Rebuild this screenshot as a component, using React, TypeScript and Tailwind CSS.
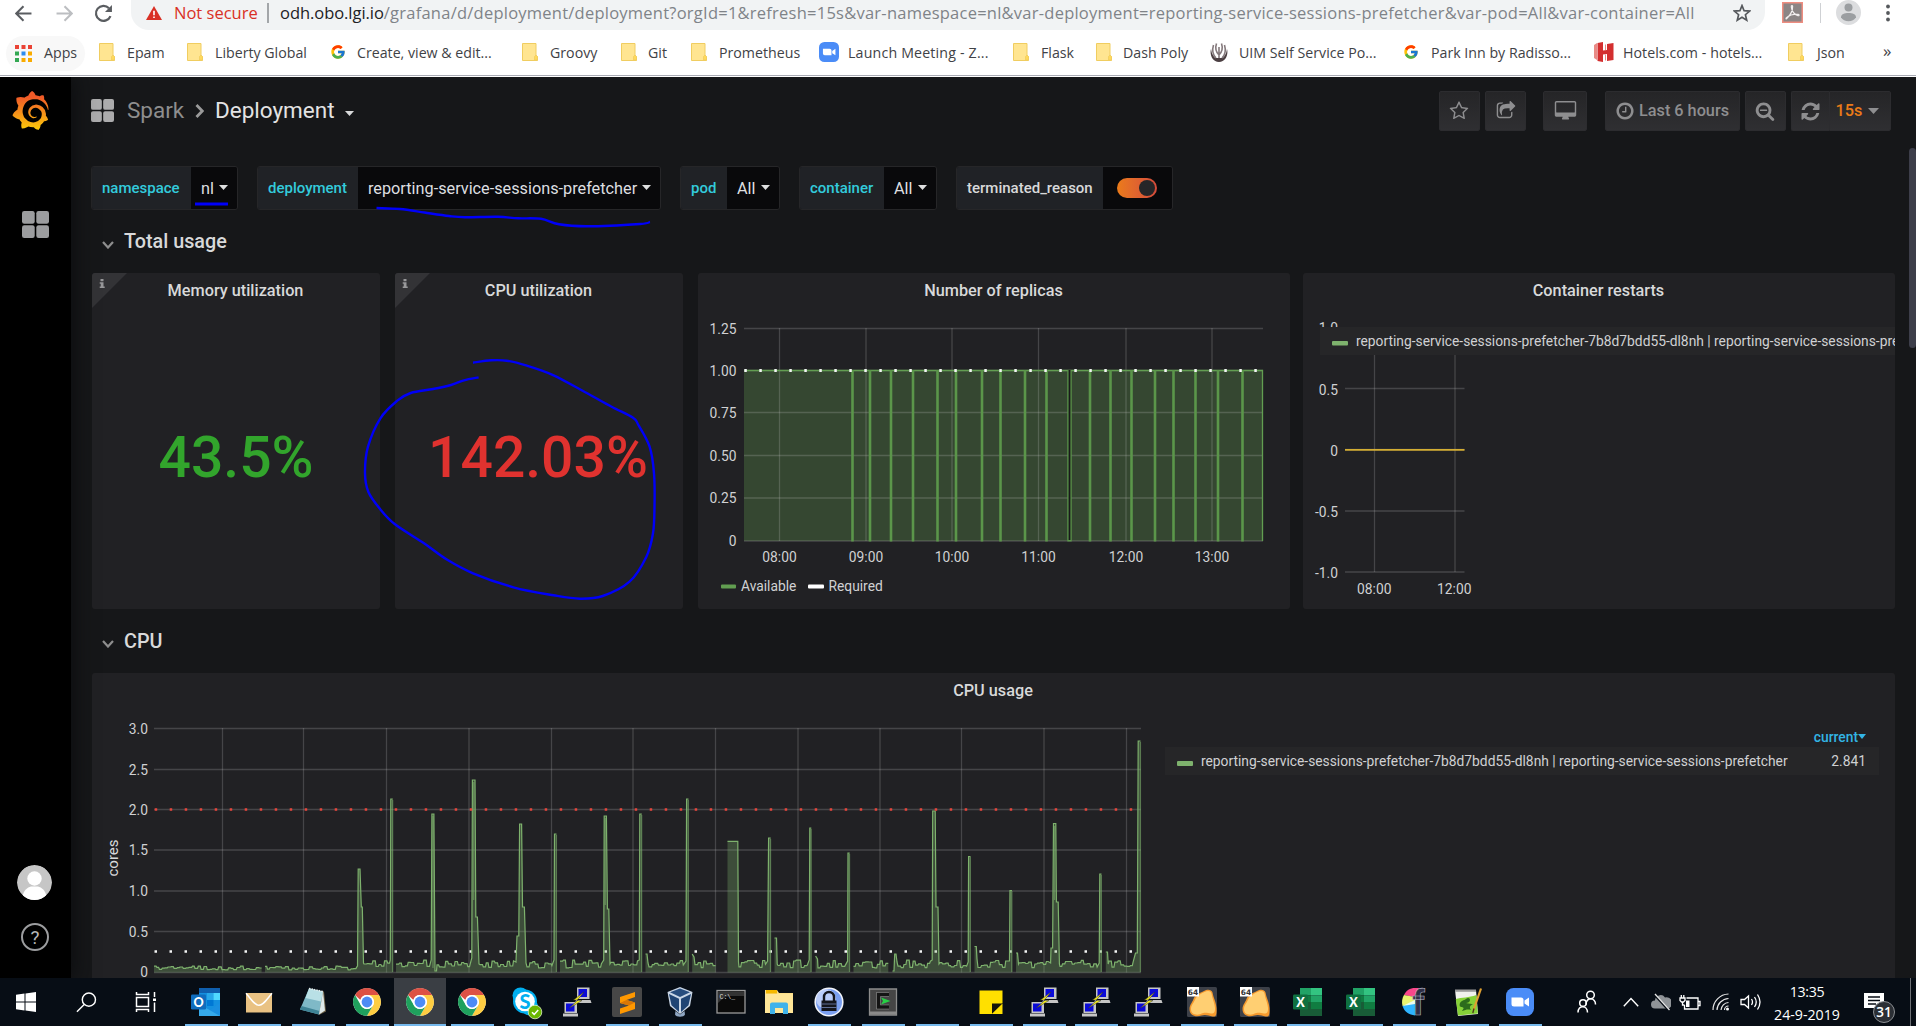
import React from "react";
import { FcGoogle } from "react-icons/fc";
import { SiGrafana } from "react-icons/si";

type Pt = [number, number];

/* ------------------------------------------------------------------ helpers */

function smooth(points: Pt[]): string {
  let d = `M${points[0][0]} ${points[0][1]}`;
  for (let i = 0; i < points.length - 1; i++) {
    const p0 = points[Math.max(i - 1, 0)];
    const p1 = points[i];
    const p2 = points[i + 1];
    const p3 = points[Math.min(i + 2, points.length - 1)];
    const c1x = p1[0] + (p2[0] - p0[0]) / 6;
    const c1y = p1[1] + (p2[1] - p0[1]) / 6;
    const c2x = p2[0] - (p3[0] - p1[0]) / 6;
    const c2y = p2[1] - (p3[1] - p1[1]) / 6;
    d += `C${c1x.toFixed(1)} ${c1y.toFixed(1)} ${c2x.toFixed(1)} ${c2y.toFixed(1)} ${p2[0]} ${p2[1]}`;
  }
  return d;
}

function Caret({ className = "" }: { className?: string }) {
  return (
    <svg viewBox="0 0 9 5" className={`h-[5px] w-[9px] shrink-0 ${className}`}>
      <path d="M0 0h9L4.5 5z" fill="currentColor" />
    </svg>
  );
}

function Fa({ d, className, w = 1792 }: { d: string; className: string; w?: number }) {
  return (
    <svg viewBox={`0 0 ${w} 1792`} className={`shrink-0 ${className}`}>
      <path d={d} fill="currentColor" />
    </svg>
  );
}

const FA = {
  star: "M1201 1004l306-297-422-62-189-382-189 382-422 62 306 297-73 421 378-199 377 199zm527-357q0 22-26 48l-363 354 86 500q1 7 1 20 0 50-41 50-19 0-40-12l-449-236-449 236q-22 12-40 12-21 0-31.5-14.5t-10.5-35.5q0-6 2-20l86-500-364-354q-25-27-25-48 0-37 56-46l502-73 225-455q19-41 49-41t49 41l225 455 502 73q56 9 56 46z",
  share:
    "M1472 989v259q0 119-84.5 203.5t-203.5 84.5h-832q-119 0-203.5-84.5t-84.5-203.5v-832q0-119 84.5-203.5t203.5-84.5h255q13 0 22.5 9.5t9.5 22.5q0 27-26 32-77 26-133 60-10 4-16 4h-112q-66 0-113 47t-47 113v832q0 66 47 113t113 47h832q66 0 113-47t47-113v-214q0-19 18-29 28-13 54-37 16-16 35-8 21 9 21 29zm237-496l-384 384q-18 19-45 19-12 0-25-5-39-17-39-59v-192h-160q-323 0-438 131-119 137-74 473 3 23-20 34-8 2-12 2-16 0-26-13-10-14-21-31t-39.5-68.5-49.5-99.5-38.5-114-17.5-122q0-49 3.5-91t14-90 28-88 47-81.5 68.5-74 94.5-61.5 124.5-48.5 159.5-30.5 196.5-11h160v-192q0-42 39-59 13-5 25-5 26 0 45 19l384 384q19 19 19 45t-19 45z",
  desktop:
    "M1856 992v-832q0-13-9.5-22.5t-22.5-9.5h-1600q-13 0-22.5 9.5t-9.5 22.5v832q0 13 9.5 22.5t22.5 9.5h1600q13 0 22.5-9.5t9.5-22.5zm128-832v1088q0 66-47 113t-113 47h-544q0 37 16 77.5t32 71 16 43.5q0 26-19 45t-45 19h-512q-26 0-45-19t-19-45q0-14 16-44t32-70 16-78h-544q-66 0-113-47t-47-113v-1088q0-66 47-113t113-47h1600q66 0 113 47t47 113z",
  clock:
    "M1024 544v448q0 14-9 23t-23 9h-320q-14 0-23-9t-9-23v-64q0-14 9-23t23-9h224v-352q0-14 9-23t23-9h64q14 0 23 9t9 23zm416 352q0-148-73-273t-198-198-273-73-273 73-198 198-73 273 73 273 198 198 273 73 273-73 198-198 73-273zm224 0q0 209-103 385.5t-279.5 279.5-385.5 103-385.5-103-279.5-279.5-103-385.5 103-385.5 279.5-279.5 385.5-103 385.5 103 279.5 279.5 103 385.5z",
  zoomOut:
    "M1088 800v64q0 13-9.5 22.5t-22.5 9.5h-576q-13 0-22.5-9.5t-9.5-22.5v-64q0-13 9.5-22.5t22.5-9.5h576q13 0 22.5 9.5t9.5 22.5zm128 32q0-185-131.5-316.5t-316.5-131.5-316.5 131.5-131.5 316.5 131.5 316.5 316.5 131.5 316.5-131.5 131.5-316.5zm512 832q0 53-37.5 90.5t-90.5 37.5q-54 0-90-38l-343-342q-179 124-399 124-143 0-273.5-55.5t-225-150-150-225-55.5-273.5 55.5-273.5 150-225 225-150 273.5-55.5 273.5 55.5 225 150 150 225 55.5 273.5q0 220-124 399l343 343q37 37 37 90z",
  refresh:
    "M1639 1056q0 5-1 7-64 268-268 434.5t-478 166.5q-146 0-282.5-55t-243.5-157l-129 129q-19 19-45 19t-45-19-19-45v-448q0-26 19-45t45-19h448q26 0 45 19t19 45-19 45l-137 137q71 66 161 102t187 36q134 0 250-65t186-179q11-17 53-117 8-23 30-23h192q13 0 22.5 9.5t9.5 22.5zm25-800v448q0 26-19 45t-45 19h-448q-26 0-45-19t-19-45 19-45l138-138q-148-137-349-137-134 0-250 65t-186 179q-11 17-53 117-8 23-30 23h-199q-13 0-22.5-9.5t-9.5-22.5v-7q65-268 270-434.5t480-166.5q146 0 284 55.5t245 156.5l130-129q19-19 45-19t45 19 19 45z",
};

/* ------------------------------------------------------------ browser chrome */

function AddressRow() {
  return (
    <div className="flex h-[30px] shrink-0 items-start">
      <div className="flex h-[26px] w-[131px] shrink-0 items-center">
        <svg viewBox="0 0 16 16" className="ml-[15px] size-[17px]" fill="none" stroke="#5a5d61" strokeWidth="1.9">
          <path d="M15.5 8H1.5M8 1.2L1.2 8 8 14.8" />
        </svg>
        <svg viewBox="0 0 16 16" className="ml-6 size-[17px]" fill="none" stroke="#bcbec1" strokeWidth="1.9">
          <path d="M.5 8h14M8 1.2L14.8 8 8 14.8" />
        </svg>
        <svg viewBox="0 0 18 18" className="ml-[21px] size-[19px]" fill="none" stroke="#5a5d61" strokeWidth="2.1">
          <path d="M15.6 11.4A7.1 7.1 0 1 1 14.2 4" />
          <path d="M17 1v6.600h-6.600z" fill="#5a5d61" stroke="none" />
        </svg>
      </div>
      <div className="flex h-[30px] w-[1634px] shrink-0 items-start rounded-b-[18px] bg-[#f1f3f4]">
        <div className="flex h-[26px] w-full items-center font-['Open_Sans',sans-serif] text-[16.5px] whitespace-nowrap">
          <svg viewBox="0 0 16 14" className="ml-[15px] h-[14px] w-4">
            <path d="M8 0l8 14H0z" fill="#d93025" />
            <path d="M7.200 4.800h1.600v4.400H7.200zM7.200 10.400h1.600V12H7.200z" fill="#fff" />
          </svg>
          <span className="ml-3 w-[83px] text-[#d93025]">Not secure</span>
          <span className="ml-[10px] h-[20px] w-[2px] bg-[#a3a6a9]" />
          <span className="ml-[11px] grow tracking-[0.24px] text-[#7f8388]">
            <span className="tracking-[-0.05px] text-[#202124]">odh.obo.lgi.io</span>
            /grafana/d/deployment/deployment?orgId=1&amp;refresh=15s&amp;var-namespace=nl&amp;var-deployment=reporting-service-sessions-prefetcher&amp;var-pod=All&amp;var-container=All
          </span>
          <svg viewBox="0 0 18 18" className="mr-[14px] size-[18px] shrink-0" fill="none" stroke="#55585c" strokeWidth="1.7">
            <path d="M9 1.600l2.100 5.100 5.500.4-4.200 3.600 1.300 5.400L9 13.200l-4.700 2.900 1.300-5.400L1.400 7.100l5.500-.4z" />
          </svg>
        </div>
      </div>
      <svg viewBox="0 0 21 21" className="mt-[2px] ml-[17px] size-[21px]">
        <rect x=".75" y=".75" width="19.5" height="19.5" fill="#8c8585" stroke="#ee8d80" strokeWidth="1.5" />
        <path
          d="M4.500 16.800C8 13.500 10.800 8.500 10.600 4.500c0-1.400-1.500-1.200-1.300.3.500 4 3.200 7.700 6.700 8.900 1.300.3 1.500-1 .2-1.300-3.700-.5-8.700.8-11.400 3-1.200 1-.9 1.900-.3 1.400z"
          fill="none"
          stroke="#f3efef"
          strokeWidth="1.200"
        />
      </svg>
      <span className="mt-[3px] ml-[17px] h-5 w-px bg-[#cfd1d4]" />
      <svg viewBox="0 0 25 25" className="ml-[15px] size-[25px]">
        <circle cx="12.500" cy="12.500" r="12.500" fill="#dcdddf" />
        <circle cx="12.500" cy="7.600" r="4" fill="#9b9ea1" />
        <path d="M5 17.300c0-3 3.500-4.200 7.500-4.200s7.500 1.200 7.500 4.200c-1.500 2.400-4.300 4-7.500 4s-6-1.600-7.500-4z" fill="#9b9ea1" />
      </svg>
      <svg viewBox="0 0 4 18" className="mt-[4px] ml-[25px] h-[18px] w-1" fill="#55585c">
        <circle cx="2" cy="2.500" r="1.900" />
        <circle cx="2" cy="9" r="1.900" />
        <circle cx="2" cy="15.500" r="1.900" />
      </svg>
    </div>
  );
}

function Folder() {
  return (
    <svg viewBox="0 0 16 18" className="h-[18px] w-4 shrink-0">
      <path d="M.5.5h13.500v12l1.500 1.200v3.800H.5z" fill="#ffe591" stroke="#f0cd60" />
      <path d="M12.500 17v-3.500l1.500-1.500 1.500 1.500V17z" fill="#ffd95c" stroke="#f0cd60" strokeWidth=".8" />
    </svg>
  );
}

function AppsGrid() {
  const colors = ["#ea4335", "#ea4335", "#ea4335", "#34a853", "#2d8cf0", "#f9ab00", "#34a853", "#f9ab00", "#f9ab00"];
  return (
    <svg viewBox="0 0 17 17" className="size-[17px] shrink-0">
      {colors.map((c, i) => (
        <rect key={i} x={(i % 3) * 6.5} y={Math.floor(i / 3) * 6.5} width="4" height="4" fill={c} />
      ))}
    </svg>
  );
}

function ZoomIcon({ className }: { className: string }) {
  return (
    <svg viewBox="0 0 28 28" className={`shrink-0 ${className}`}>
      <rect width="28" height="28" rx="7.500" fill="#4a8cf7" />
      <path d="M5.500 9.500h9.500a2.500 2.500 0 0 1 2.500 2.500v6.500H8a2.500 2.500 0 0 1-2.500-2.500zM18.500 12.600l4.500-3v9l-4.500-3z" fill="#fff" />
    </svg>
  );
}

function TridentIcon() {
  return (
    <svg viewBox="0 0 18 20" className="h-5 w-[18px] shrink-0">
      <path d="M1 7c-1.500 5 1 13 8 13s9.500-8 8-13c-.6 5-3 8-4.500 9h-7C4 15 1.600 12 1 7z" fill="#4b3f42" />
      <path d="M3.500 3C2 8 3 13 6 16M14.500 3c1.500 5 .5 10-2.500 13M9 5v11M6.500 1.500C5 6 6 10 9 13c3-3 4-7 2.500-11.500" fill="none" stroke="#857a7d" strokeWidth="1.600" />
    </svg>
  );
}

function HotelsIcon() {
  return (
    <svg viewBox="0 0 20 20" className="size-5 shrink-0">
      <path d="M0 3l3-2v17l-3-2z" fill="#e98b86" />
      <path d="M3.500 1L9 0v8.500l4-.5V2l6.500-1v17L13 19v-7l-4 .600V20l-5.500-1z" fill="#d32f2f" />
      <path d="M11.500 2.500V8M11.500 12.500v6" stroke="#e98b86" strokeWidth="1" />
    </svg>
  );
}

const bookmarks: { label: string; icon: React.ReactNode; width: string; gap: string }[] = [
  { label: "Epam", icon: <Folder />, width: "w-[88px]", gap: "gap-3" },
  { label: "Liberty Global", icon: <Folder />, width: "w-[143px]", gap: "gap-3" },
  { label: "Create, view & edit...", icon: <FcGoogle className="size-4 shrink-0" />, width: "w-[192px]", gap: "gap-[11px]" },
  { label: "Groovy", icon: <Folder />, width: "w-[99px]", gap: "gap-3" },
  { label: "Git", icon: <Folder />, width: "w-[70px]", gap: "gap-[11px]" },
  { label: "Prometheus", icon: <Folder />, width: "w-[128px]", gap: "gap-3" },
  { label: "Launch Meeting - Z...", icon: <ZoomIcon className="size-5" />, width: "w-[194px]", gap: "gap-[9px] tracking-[0.18px]" },
  { label: "Flask", icon: <Folder />, width: "w-[83px]", gap: "gap-3" },
  { label: "Dash Poly", icon: <Folder />, width: "w-[114px]", gap: "gap-[11px]" },
  { label: "UIM Self Service Po...", icon: <TridentIcon />, width: "w-[193px]", gap: "gap-[11px]" },
  { label: "Park Inn by Radisso...", icon: <FcGoogle className="size-4 shrink-0" />, width: "w-[191px]", gap: "gap-3" },
  { label: "Hotels.com - hotels...", icon: <HotelsIcon />, width: "w-[194px]", gap: "gap-[9px] tracking-[0.05px]" },
  { label: "Json", icon: <Folder />, width: "w-[95px]", gap: "gap-[13px]" },
];

function BookmarkBar() {
  return (
    <div className="flex h-[45px] shrink-0 items-center pl-1.5 font-['Open_Sans',sans-serif] text-[14.2px] whitespace-nowrap text-[#3f4246]">
      <div className="mt-px mr-3.5 flex h-[35px] w-[79px] items-center gap-3 rounded-full bg-[#f8f8f8] pl-[9px]">
        <AppsGrid />
        <span>Apps</span>
      </div>
      {bookmarks.map((b) => (
        <div key={b.label} className={`flex shrink-0 items-center ${b.width} ${b.gap}`}>
          {b.icon}
          <span>{b.label}</span>
        </div>
      ))}
      <span className="-mt-1 text-[17px]">»</span>
    </div>
  );
}

/* -------------------------------------------------------------------- sidebar */

function DashGrid({ className, fill }: { className: string; fill: string }) {
  return (
    <svg viewBox="0 0 24 24" className={`shrink-0 ${className}`} fill={fill}>
      <rect width="11.300" height="11.300" rx="2" />
      <rect x="12.700" width="11.300" height="11.300" rx="2" />
      <rect y="12.700" width="11.300" height="11.300" rx="2" />
      <rect x="12.700" y="12.700" width="11.300" height="11.300" rx="2" />
    </svg>
  );
}

function Sidebar() {
  return (
    <aside className="z-10 flex w-[71px] shrink-0 flex-col bg-black shadow-[0_0_20px_2px_#0b0c0e]">
      <svg className="size-0">
        <defs>
          <linearGradient id="grafana-flame" x1="0" y1="0" x2="0" y2="1">
            <stop offset="0.150" stopColor="#f05a28" />
            <stop offset="1" stopColor="#fbca0a" />
          </linearGradient>
        </defs>
      </svg>
      <SiGrafana className="mt-3.5 ml-[11px] size-[39px]" style={{ fill: "url(#grafana-flame)" }} />
      <DashGrid className="mt-[81px] ml-[22px] size-[27px]" fill="#9c9d9f" />
      <div className="grow" />
      <svg viewBox="0 0 35 35" className="ml-[17px] size-[35px] rounded-full">
        <circle cx="17.500" cy="17.500" r="17.500" fill="#c6c6c6" />
        <circle cx="17.500" cy="13.500" r="7.200" fill="#fff" />
        <path d="M5.500 32c1-7 5-9.500 8.500-10.500h7c3.500 1 7.500 3.500 8.500 10.500-3 2.500-7 4-12 4s-9-1.500-12-4z" fill="#fff" />
      </svg>
      <div className="mt-[23px] mb-[27px] ml-[21px] flex size-7 items-center justify-center rounded-full border-2 border-[#9c9d9f] text-[19px] leading-none text-[#b5b6b8]">
        ?
      </div>
    </aside>
  );
}

/* --------------------------------------------------------------------- header */

const btn =
  "flex h-10 shrink-0 items-center justify-center rounded-[2px] border border-[#2c2c2f] bg-linear-to-b from-[#252527] to-[#2f2f32] text-[#8e8e90]";

function Header() {
  return (
    <header className="mt-3.5 flex h-10 shrink-0 items-center">
      <DashGrid className="-mt-px size-[23px]" fill="#acacad" />
      <div className="flex items-center pl-[13px] text-[22.5px]">
        <span className="w-[68px] text-[#8e8e8e]">Spark</span>
        <svg viewBox="0 0 9 14" className="h-[14px] w-[9px]" fill="none" stroke="#9a9a9a" strokeWidth="2.800">
          <path d="M1.500 1L7.300 7 1.500 13" />
        </svg>
        <span className="ml-[11px] w-[130px] text-[#e3e3e3]">Deployment</span>
        <Caret className="mt-[5px] text-[#d8d9da]" />
      </div>
      <div className="grow" />
      <div className={`w-[41px] pr-px ${btn}`}>
        <Fa d={FA.star} className="size-[20px]" />
      </div>
      <div className={`ml-[5px] w-[41px] ${btn}`}>
        <Fa d={FA.share} className="size-5" />
      </div>
      <div className={`ml-[17px] w-11 ${btn}`}>
        <Fa d={FA.desktop} w={2048} className="h-5 w-[23px]" />
      </div>
      <div className={`ml-[18px] w-[135px] gap-1 pr-px text-[16.25px] font-medium ${btn}`}>
        <Fa d={FA.clock} className="size-[20px]" />
        <span>Last 6 hours</span>
      </div>
      <div className={`ml-[5px] w-[41px] pr-px ${btn}`}>
        <Fa d={FA.zoomOut} className="size-5" />
      </div>
      <div className={`ml-[5px] w-[38px] rounded-r-none border-r-0 ${btn}`}>
        <Fa d={FA.refresh} className="size-[21px]" />
      </div>
      <div className={`mr-[25px] w-[62px] gap-1.5 rounded-l-none pr-[5px] ${btn}`}>
        <span className="text-[16.25px] font-medium text-[#eb7b18]">15s</span>
        <svg viewBox="0 0 11 6" className="h-1.5 w-[11px]">
          <path d="M0 0h11L5.500 6z" fill="#8e8e90" />
        </svg>
      </div>
    </header>
  );
}

function Variable({ label, value, width, labelWidth }: { label: string; value: string; width: string; labelWidth: string }) {
  return (
    <div className={`flex h-11 shrink-0 overflow-hidden rounded-[3px] border border-[#262628] ${width}`}>
      <div className={`flex shrink-0 items-center bg-[#202226] pt-px pl-2.5 text-[15px] font-medium text-[#33cbdc] ${labelWidth}`}>{label}</div>
      <div className="flex grow items-center gap-[5px] bg-[#09090b] pt-0.5 pl-2.5 text-[16.25px] text-[#dedfe0]">
        <span>{value}</span>
        <Caret className="-mt-[3px]" />
      </div>
    </div>
  );
}

function VariablesRow() {
  return (
    <div className="mt-[35px] flex h-11 shrink-0 gap-[19px] whitespace-nowrap">
      <Variable label="namespace" value="nl" width="w-[147px]" labelWidth="w-[99px]" />
      <Variable label="deployment" value="reporting-service-sessions-prefetcher" width="w-[404px]" labelWidth="w-[100px]" />
      <Variable label="pod" value="All" width="w-[100px]" labelWidth="w-[46px]" />
      <Variable label="container" value="All" width="w-[138px]" labelWidth="w-[84px]" />
      <div className="flex h-11 w-[217px] shrink-0 overflow-hidden rounded-[3px] border border-[#262628]">
        <div className="flex w-[146px] shrink-0 items-center bg-[#202226] pt-px pl-2.5 text-[15px] font-medium text-[#d8d9da]">terminated_reason</div>
        <div className="flex grow items-center bg-[#09090b] pl-3.5">
          <div className="flex h-5 w-10 items-center justify-end rounded-full bg-linear-to-r from-[#eb7b18] to-[#d44a3a] pr-[2px]">
            <span className="size-4 rounded-full bg-[#262628]" />
          </div>
        </div>
      </div>
    </div>
  );
}

function RowTitle({ title, height }: { title: string; height: string }) {
  return (
    <div className={`flex shrink-0 items-center pl-[11px] ${height}`}>
      <svg viewBox="0 0 12 8" className="mt-[6px] h-2 w-3" fill="none" stroke="#8e8e8e" strokeWidth="2.200">
        <path d="M1 1l5 5.500L11 1" />
      </svg>
      <span className="mt-px ml-[10px] text-[19.8px] font-medium text-[#d8d9da]">{title}</span>
    </div>
  );
}

/* --------------------------------------------------------------------- panels */

function Panel({ title, width, info, children }: { title: string; width: string; info?: boolean; children: React.ReactNode }) {
  return (
    <section className={`relative flex shrink-0 flex-col overflow-hidden rounded-[3px] bg-[#212124] ${width}`}>
      {info && (
        <svg viewBox="0 0 35 35" className="absolute top-0 left-0 size-[35px]">
          <path d="M0 0h35L0 35z" fill="#333336" />
          <path d="M8.500 6h3v2.300h-3zM7.700 9.300h3.800v4.300h1.200V15H7.700v-1.400h1v-2.900h-1z" fill="#98989a" />
        </svg>
      )}
      <h3 className="flex h-[34px] shrink-0 items-center justify-center pt-0.5 pr-px text-[16.25px] font-medium text-[#d8d9da]">{title}</h3>
      {children}
    </section>
  );
}

function Tick({ x, y, children, anchor = "end" }: { x: number; y: number; children: string; anchor?: "end" | "middle" | "start" }) {
  return (
    <text x={x} y={y + 5} textAnchor={anchor} fontSize="13.800" fill="#d0d1d3">
      {children}
    </text>
  );
}

const drops = [852.5, 870, 891, 913, 937.5, 956, 982, 1000.5, 1025, 1046.5, 1069.5, 1090, 1110.5, 1131.5, 1155, 1173.5, 1195.5, 1218, 1242.5];

function ReplicasChart() {
  const ys: [number, string][] = [[328.5, "1.25"], [370.5, "1.00"], [412.5, "0.75"], [455.5, "0.50"], [498, "0.25"], [541, "0"]];
  const xs: [number, string][] = [[779.5, "08:00"], [866, "09:00"], [952, "10:00"], [1038.5, "11:00"], [1126, "12:00"], [1212, "13:00"]];
  return (
    <svg viewBox="698 307 592 302" className="h-[302px] w-[592px]">
      <rect x="744" y="370.500" width="518.500" height="170.500" fill="#629e51" fillOpacity="0.300" />
      {ys.map(([y, t]) => (
        <g key={t}>
          <path d={`M744 ${y}H1263`} stroke="#c8c8c8" strokeOpacity="0.220" strokeWidth="1.300" />
          <Tick x={736.5} y={y}>{t}</Tick>
        </g>
      ))}
      {xs.map(([x, t]) => (
        <g key={t}>
          <path d={`M${x} 328V541`} stroke="#c8c8c8" strokeOpacity="0.220" strokeWidth="1.300" />
          <Tick x={x} y={557.3} anchor="middle">{t}</Tick>
        </g>
      ))}
      <path d="M744 370.500H1262.500V541" fill="none" stroke="#629e51" strokeWidth="1.300" />
      {drops.map((x) => (
        <path key={x} d={`M${x} 370V541.500`} stroke="#5b964a" strokeWidth={x === 1069.5 ? 4.4 : 2.6} />
      ))}
      <path d="M1069.500 370V540" stroke="#19191b" strokeWidth="1.900" />
      <path d="M744 370.500H1263" stroke="#f4f5f5" strokeWidth="2.800" strokeDasharray="2.500 12.500" strokeDashoffset="-0.300" />
      <rect x="721" y="584.500" width="15" height="4" rx="1" fill="#629e51" />
      <Tick x={741} y={586} anchor="start">Available</Tick>
      <rect x="808" y="584.500" width="16" height="4" rx="1" fill="#fff" />
      <Tick x={828.5} y={586} anchor="start">Required</Tick>
    </svg>
  );
}

function RestartsChart() {
  const ys: [number, string][] = [[388.5, "0.5"], [449.5, "0"], [511, "-0.5"], [572, "-1.0"]];
  return (
    <svg viewBox="1303 307 592 302" className="h-[302px] w-[592px]">
      <Tick x={1338} y={328}>1.0</Tick>
      {ys.map(([y, t]) => (
        <g key={t}>
          <path d={`M1345 ${y}H1464.500`} stroke="#c8c8c8" strokeOpacity="0.220" strokeWidth="1.300" />
          <Tick x={1338} y={y + 1}>{t}</Tick>
        </g>
      ))}
      <path d="M1374.500 328V572M1455 328V572" stroke="#c8c8c8" strokeOpacity="0.220" strokeWidth="1.300" />
      <path d="M1345 449.900H1464.500" stroke="#d4ae33" strokeWidth="1.900" />
      <Tick x={1374.3} y={588.5} anchor="middle">08:00</Tick>
      <Tick x={1454.3} y={588.5} anchor="middle">12:00</Tick>
      <rect x="1320" y="327" width="580" height="28" fill="#262628" />
      <rect x="1332" y="341" width="16" height="4.500" rx="1" fill="#7eb26d" />
      <Tick x={1356} y={341} anchor="start">reporting-service-sessions-prefetcher-7b8d7bdd55-dl8nh | reporting-service-sessions-prefetcher</Tick>
    </svg>
  );
}

/* Runs of CPU samples; a new array starts wherever the series has no data. */
const cpuRuns: Pt[][] = (() => {
  let seed = 11;
  const rnd = () => {
    seed = (seed * 16807) % 2147483647;
    return seed / 2147483647;
  };
  const noise = (from: number, to: number, level = 964, amp = 8): Pt[] => {
    const out: Pt[] = [];
    let x = from;
    while (x < to) {
      const y = level + (rnd() - 0.5) * amp;
      out.push([x, y]);
      const step = x + 1.6 + rnd() * 1.2;
      if (step < to) out.push([step, y]);
      x = step + 0.8;
    }
    return out;
  };
  const low = (a: number, b: number) => noise(a, b, 968, 3.6);
  return [
    [...low(154, 262)],
    [...low(265, 357), [357.5, 966], [358.2, 869], [360, 869], [361.3, 907], [362.3, 907], [363.5, 963], ...noise(364, 390), [390.3, 960], [390.8, 799], [392.8, 799]],
    [...noise(396, 431), [431.2, 960], [431.9, 814], [433.9, 814], [435, 971], [436.5, 971], ...noise(437, 470), [471.8, 958], [472.4, 780], [475, 780], [475.8, 917], [477.4, 917], [479, 964], ...noise(480, 515), [516, 962], [517, 936], [518.8, 936], [519.6, 824], [521.6, 824], [522.5, 907], [524.4, 907], [526, 963], ...noise(527, 552), [554, 960], [554.5, 834], [556.5, 834]],
    [...noise(560, 603), [603.7, 960], [604.2, 816], [606.4, 816], [607.4, 909], [608.8, 909], [610, 964], ...noise(611, 638), [639.3, 960], [639.8, 814], [641.8, 814]],
    [[645.5, 954], [647, 954], [648, 963], ...noise(649, 685), [686, 961], [686.6, 799], [688.5, 799]],
    [[692.2, 954], [694, 957], ...noise(695, 716)],
    [[727.5, 841.3], [737.8, 841.3], [738.5, 962], ...noise(739, 767), [767.6, 961], [768.6, 838], [770.7, 838]],
    [[774.5, 938], [776.5, 938], [777.2, 964], ...noise(778, 808), [809.2, 960], [809.8, 828], [811.3, 828]],
    [[815.6, 956], [817.5, 959], ...noise(818, 846), [847.6, 961], [848, 853], [849.7, 853]],
    [...noise(853.5, 889)],
    [[892.5, 971], [894, 971], [894.7, 954], [896, 954], [897, 962], ...noise(898, 931), [932.2, 960], [932.7, 811], [935.2, 811], [936, 907], [938, 907], [939, 964], ...noise(940, 967), [968.2, 962], [968.6, 856.5], [970.5, 856.5]],
    [[974.5, 946.5], [976.3, 946.5], [977, 959], ...noise(978, 1008), [1009.5, 961], [1010, 890.5], [1012, 890.5]],
    [[1016, 953], [1017.5, 953], [1018.5, 964], ...noise(1019, 1049), [1050.6, 963], [1051, 948], [1052.6, 948], [1053.5, 823.5], [1055.8, 823.5], [1056.4, 902], [1058.2, 902], [1059.4, 964], ...noise(1060, 1098), [1099.2, 963], [1099.8, 874], [1101.5, 874]],
    [[1105.8, 952], [1107.5, 952], [1108.2, 964], ...noise(1109, 1134), [1135.5, 953], [1137.3, 953], [1138.2, 741], [1140.5, 741]],
  ];
})();

function CpuChart() {
  const ys: [number, string][] = [[728.5, "3.0"], [769.5, "2.5"], [809.5, "2.0"], [850, "1.5"], [891, "1.0"], [931.5, "0.5"], [972.5, "0"]];
  const xs = [222.5, 303.5, 386.5, 469, 551.5, 633, 715.5, 798, 880, 961.5, 1044, 1126.5];
  return (
    <svg viewBox="92 707 1060 271" className="h-[271px] w-[1060px] shrink-0">
      {ys.map(([y, t]) => (
        <g key={t}>
          <path d={`M154 ${y}H1141`} stroke="#c8c8c8" strokeOpacity="0.220" strokeWidth="1.300" />
          <Tick x={148} y={t === "0" ? y - 0.5 : y + 0.2}>{t}</Tick>
        </g>
      ))}
      {xs.map((x) => (
        <path key={x} d={`M${x} 728V972.500`} stroke="#c8c8c8" strokeOpacity="0.220" strokeWidth="1.300" />
      ))}
      <text transform="translate(117.500 858) rotate(-90)" textAnchor="middle" fontSize="15" fill="#d8d9da">
        cores
      </text>
      <path d="M154 951.500H1141" stroke="#f4f5f5" strokeWidth="2.600" strokeDasharray="2.500 12.500" strokeDashoffset="-0.500" />
      {cpuRuns.map((run, i) => {
        const line = run.map((p) => `${p[0].toFixed(1)} ${p[1].toFixed(1)}`).join("L");
        return (
          <g key={i}>
            <path d={`M${run[0][0]} 972.500L${line}V972.500z`} fill="#7eb26d" fillOpacity="0.300" />
            <path d={`M${line}`} fill="none" stroke="#7eb26d" strokeWidth="1.200" />
          </g>
        );
      })}
      <path
        d="M392.600 800V972M556.400 835V972M641.600 815V972M688.300 800V972M770.500 839V972M811.100 829V972M849.500 854V972M970.300 857V972M1011.800 891V972M1101.300 875V972M1140.400 742V972M433 816V968M473.700 782V900M605.300 818V905M1054.600 826V900"
        stroke="#7eb26d"
        strokeOpacity="0.550"
        strokeWidth="1.300"
      />
      <path d="M154 809.500H1141" stroke="#e8463c" strokeWidth="2.600" strokeDasharray="2.500 12.500" strokeDashoffset="-0.700" />
    </svg>
  );
}

function CpuLegend() {
  return (
    <div className="mt-[21px] ml-[13px] flex w-[714px] flex-col text-[13.8px] text-[#d0d1d3]">
      <div className="mb-px flex h-[18px] items-center justify-end pr-[13px] font-medium text-[#33b5e5]">
        <span>current</span>
        <svg viewBox="0 0 8 5" className="-mt-0.5 h-[5px] w-2">
          <path d="M0 0h8L4 5z" fill="#33b5e5" />
        </svg>
      </div>
      <div className="flex h-7 items-center bg-[#262628] pr-[13px] pl-3">
        <span className="mt-1 h-[5px] w-4 rounded-[1px] bg-[#7eb26d]" />
        <span className="ml-2">reporting-service-sessions-prefetcher-7b8d7bdd55-dl8nh | reporting-service-sessions-prefetcher</span>
        <span className="grow text-right">2.841</span>
      </div>
    </div>
  );
}

/* -------------------------------------------------------------- pen annotations */

const underline: Pt[] = [[376.5, 208], [400, 209], [424.5, 212.5], [449, 216], [465, 217.2], [498, 216.8], [518, 218.3], [541, 218.8], [559, 224.3], [588, 226.3], [640, 224], [650, 222]];
const loop: Pt[] = [[473, 362.7], [491, 360.3], [506.7, 360.7], [527, 365.7], [553.6, 375.3], [584.8, 392], [611.6, 406.7], [633, 417.7], [638.4, 425], [649.6, 446.7], [654, 473.3], [654.5, 506.7], [653, 533.3], [646.4, 556.7], [629.5, 581.7], [602.7, 596], [580, 598.7], [553.6, 595.3], [513.4, 587.3], [473, 573.3], [446.4, 559.3], [424, 543.3], [395, 524.3], [379.5, 508.3], [368.3, 491.7], [365, 473.3], [368, 446.7], [380.4, 418.3], [397.3, 400.7], [410.7, 393], [433, 389], [451, 385], [464, 380.3], [478.6, 377.3]];

function PenStrokes() {
  return (
    <svg viewBox="0 0 800 700" className="pointer-events-none absolute top-0 left-0 z-20 h-[700px] w-[800px]" fill="none" stroke="#0000f8" strokeWidth="2.400">
      <path d="M195 204H228" strokeWidth="2.800" />
      <path d={smooth(underline)} />
      <path d={smooth(loop)} />
    </svg>
  );
}

/* -------------------------------------------------------------------- taskbar */

function Svg({ children, size = "size-8" }: { children: React.ReactNode; size?: string }) {
  return (
    <svg viewBox="0 0 32 32" className={`shrink-0 overflow-visible ${size}`}>
      {children}
    </svg>
  );
}

const Chrome = () => (
  <Svg>
    <circle cx="16" cy="16" r="13.800" fill="#fff" />
    <path d="M4 9.100A13.800 13.800 0 0 1 28 9.100H16a6.900 6.900 0 0 0-6.600 4.900z" fill="#dd5144" />
    <path d="M28 9.100A13.800 13.800 0 0 1 16 29.800L22 19.500A6.900 6.900 0 0 0 16 9.100z" fill="#fecd42" />
    <path d="M4 9.100A13.800 13.800 0 0 0 16 29.800L22 19.500a6.900 6.900 0 0 1-12 0z" fill="#1fa15d" />
    <circle cx="16" cy="16" r="6.900" fill="#fff" />
    <circle cx="16" cy="16" r="5.400" fill="#4c8bf5" />
  </Svg>
);

const Outlook = () => (
  <Svg>
    <path d="M9 2h21v28H9z" fill="#1490df" />
    <path d="M9 2h21v5H9z" fill="#0f5fae" />
    <path d="M17 7h6.500v7H17z" fill="#28a8ea" />
    <path d="M23.500 7H30v7h-6.500z" fill="#50d9ff" />
    <path d="M17 14h6.500v6H17z" fill="#0078d4" />
    <path d="M9 18l11 6 10-7v13H9z" fill="#1a8fe0" />
    <path d="M9 18l21 12H9z" fill="#35a9ea" />
    <rect x="1" y="8.500" width="15" height="15" rx="1.200" fill="#0f6cbd" />
    <text x="8.500" y="20.600" textAnchor="middle" fontFamily="Lato, sans-serif" fontWeight="900" fontSize="12.500" fill="#fff">O</text>
  </Svg>
);

const Mail = () => (
  <Svg>
    <path d="M3 7h26v19.500H3z" fill="#e9c283" />
    <path d="M3 7.300c6 7 9 12 13 12S23 14.300 29 7.300" fill="none" stroke="#fff" strokeWidth="1.400" />
  </Svg>
);

const Notes = () => (
  <Svg>
    <path d="M13 3l14 2.500 2 20-7 3.500z" fill="#6f6248" />
    <path d="M12 2.500l14 3L22 28.500 3 23.500z" fill="#7fb9c7" />
    <path d="M12 2.500l14 3-2 10L8.500 12z" fill="#b9e0e6" />
    <path d="M3 23.500l19 5 .6-3.500L4.500 20z" fill="#3f8496" />
    <path d="M26 5.500L22 28.500l6-4z" fill="#dfe9ea" />
    <path d="M12 2.500l14 3" stroke="#e9eff0" strokeWidth="1.500" strokeDasharray="1.500 1" />
  </Svg>
);

const Skype = () => (
  <Svg>
    <circle cx="10.500" cy="9.500" r="8" fill="#00aff0" />
    <circle cx="19.500" cy="21" r="8.500" fill="#00aff0" />
    <circle cx="15" cy="15.500" r="12" fill="#00aff0" />
    <circle cx="15" cy="15.500" r="9.800" fill="#fff" />
    <text x="15" y="22.600" textAnchor="middle" fontFamily="Lato, sans-serif" fontWeight="900" fontSize="20" fill="#00aff0">S</text>
    <circle cx="25" cy="26" r="6.800" fill="#6bb700" stroke="#dff0c8" strokeWidth=".8" />
    <path d="M22 26.200l2.200 2.200 4-4.400" fill="none" stroke="#fff" strokeWidth="1.500" />
  </Svg>
);

const Putty = () => (
  <Svg>
    <path d="M16 1.500h12.500V13H16zM15 14h14.500l1 3H14z" fill="#c5c5c5" />
    <path d="M17.500 3h8.500v8h-8.500z" fill="#0b0bd8" />
    <path d="M3.500 16H16v11H3.500zM2 27.500h15v3H2z" fill="#c5c5c5" />
    <path d="M5 17.500h8.500v8H5z" fill="#0b0bd8" />
    <path d="M23 6l-10.500 8h4.500L8.500 22l12.500-7.500h-5z" fill="#f2ea1c" stroke="#333" strokeWidth=".5" />
  </Svg>
);

const Sublime = () => (
  <Svg>
    <rect x="1" y="1" width="30" height="30" rx="2" fill="#474747" />
    <path d="M24 6L9 11v6l9 2.500-9 3V28l15-5v-6.500L15.500 14 24 11z" fill="#ff9800" />
    <path d="M9 17l9 2.500 6-3-8.500-2.500z" fill="#d97706" />
  </Svg>
);

const VirtualBox = () => (
  <Svg>
    <path d="M16 1l12.500 5L26 20l-10 8L6 20 3.500 6z" fill="#c9d6e6" />
    <path d="M16 2.500L26 6.200 16 11 6 6.200z" fill="#274d7e" />
    <path d="M5 8l10 4.800V26l-7.500-6.800zM27 8l-10 4.800V26l7.500-6.800z" fill="#1f4474" />
    <path d="M11.500 25l4.500 3.500 4.500-3.500.5 3.500c-1 3-9 3-10 0z" fill="#8fa6c2" />
  </Svg>
);

const Cmd = () => (
  <Svg>
    <rect x="2" y="4.500" width="28" height="22.500" fill="#0a0a0a" stroke="#9a9a9a" strokeWidth="1.300" />
    <path d="M3 5.500h26V10H15c-5 .5-8 3-12 7z" fill="#333" />
    <text x="4.500" y="12.500" fontFamily="Liberation Mono, monospace" fontSize="6.500" fill="#ddd">C:\_</text>
  </Svg>
);

const Explorer = () => (
  <Svg>
    <path d="M2 4h12l2 3h14v20H2z" fill="#fde08a" />
    <path d="M3 4h11v3.500H3z" fill="#f5b800" />
    <path d="M2 8h28v19H2z" fill="#ffe698" />
    <path d="M7 28v-9.500q0-2 2-2h14q2 0 2 2V28h-5v-6h-8v6z" fill="#3fb2ea" />
  </Svg>
);

const KeePass = () => (
  <Svg>
    <circle cx="16" cy="16" r="13.800" fill="#7a9ff0" stroke="#f2f4fa" strokeWidth="1.600" />
    <circle cx="13" cy="13" r="10" fill="#c6d5fb" fillOpacity=".85" />
    <path d="M11 15v-4a5 5 0 0 1 10 0v4" fill="none" stroke="#14151c" strokeWidth="2.400" />
    <path d="M8.500 14.500h15V25h-15z" fill="#14151c" />
    <path d="M8.500 18h15M8.500 21.500h15" stroke="#7286b8" strokeWidth=".8" />
  </Svg>
);

const Terminal = () => (
  <Svg>
    <path d="M2.500 3h27v26h-27z" fill="#454545" stroke="#8c8c8c" strokeWidth="1.300" />
    <path d="M3 25.500h26v3H3z" fill="#8a8a8a" />
    <path d="M22 8.500H11.500V21H22" fill="none" stroke="#9b9b9b" strokeWidth="4.600" />
    <path d="M22 8.500H11.500V21H22" fill="none" stroke="#141414" strokeWidth="3.500" />
    <path d="M14 11.500l9.500 3.500-9.500 3.500 2-3.500z" fill="#27d045" />
  </Svg>
);

const Sticky = () => (
  <Svg>
    <path d="M4.500 4.500h23V17L17.500 28h-13z" fill="#ffe000" />
    <path d="M17 28V17.500h10.500z" fill="#15140a" />
    <path d="M27.500 17.500V28H17z" fill="#ffe000" />
  </Svg>
);

const Shell = () => (
  <Svg>
    <rect x="1" y="1" width="30" height="30" rx="1.500" fill="#3c4048" />
    <path d="M18 5c3-2 7.500-2 8.500 1.500 1 6 3.500 9 4 15.500.5 8-1 9-4 8.500-4-.8-7-2.500-11-1-6 2-12 0-12-6.500 0-4 3-7 4-10 1.500-4 5-5.500 10.500-8z" fill="#f59a2e" />
    <path d="M18.500 6c3-1.500 6-1.500 7 1.500 1 6 3 9 3.500 14.500.3 5-2 6-4 5.500-5-1-7-1-11 .8-4 1-9 0-9-5 0-4 2.500-6 4-9.500 1.500-4 5-5.500 9.500-7.800z" fill="#ffcf72" />
    <rect x="1" y="1" width="12" height="9.500" fill="#fff" />
    <text x="7" y="8.800" textAnchor="middle" fontFamily="DejaVu Sans, sans-serif" fontWeight="700" fontSize="7.500" fill="#333">64</text>
  </Svg>
);

const Excel = () => (
  <Svg>
    <path d="M8 2h11v7.500H8z" fill="#21a366" />
    <path d="M19 2h11v7.500H19z" fill="#33c481" />
    <path d="M8 9.500h11V16H8z" fill="#107c41" />
    <path d="M19 9.500h11V16H19z" fill="#21a366" />
    <path d="M8 16h11v7H8z" fill="#185c37" />
    <path d="M19 16h11v7H19z" fill="#107c41" />
    <path d="M8 23h22v7H8z" fill="#185c37" />
    <rect x="1" y="8.500" width="15" height="15" rx="1.200" fill="#0f7040" />
    <text x="8.500" y="20.600" textAnchor="middle" fontFamily="Lato, sans-serif" fontWeight="900" fontSize="12.500" fill="#fff">X</text>
  </Svg>
);

const ColorF = () => (
  <Svg>
    <path d="M6 9C8 4.500 12 2 17 2h4l-5 9z" fill="#f9468a" />
    <path d="M6 9l11 2v7L4.500 20C3.500 16 4 12 6 9z" fill="#eaf36f" />
    <path d="M4.500 20L17 17v12.500C11 28.500 6.500 26 4.500 20z" fill="#2fb4ff" />
    <path d="M4.500 20L17 14v4z" fill="#eafcf0" />
    <text x="20.500" y="29" textAnchor="middle" fontFamily="Roboto, sans-serif" fontWeight="700" fontSize="35" fill="#2e2e44" stroke="#b5b5c6" strokeWidth=".6">f</text>
  </Svg>
);

const NotepadPlus = () => (
  <Svg>
    <path d="M4 4h21l2 24-20 2z" fill="#f1f2ee" />
    <path d="M4 3.500h21v2.300H4z" fill="#9a9a9a" />
    <path d="M4.800 13c6-2 13-1 20.500-4l1.500 18.500L7 29.500z" fill="#86d138" />
    <path d="M9 17c2-3 5-3 6-4 2-2 4-1 4 1s-2 3-4 3c3 1 5 0 7 2-3 0-4 2-2 5-4-1-5 0-9 1 1-2 3-3 0-4-2 0-3-1-2-4z" fill="#2c6b1c" />
    <path d="M30 2.500L22.500 24" stroke="#e0a030" strokeWidth="2.200" />
    <path d="M23 22.500L21.800 27" stroke="#4a3418" strokeWidth="1.300" />
  </Svg>
);

const tasks: { icon?: React.ReactNode; margin: string; open?: boolean; active?: boolean }[] = [
  { icon: <Outlook />, margin: "ml-0", open: true },
  { icon: <Mail />, margin: "ml-px", open: true },
  { icon: <Notes />, margin: "ml-0.5", open: true },
  { icon: <Chrome />, margin: "ml-0.5", open: true },
  { icon: <Chrome />, margin: "ml-px", open: true, active: true },
  { icon: <Chrome />, margin: "ml-0", open: true },
  { icon: <Skype />, margin: "ml-0.5", open: true },
  { icon: <Putty />, margin: "-ml-px" },
  { icon: <Sublime />, margin: "-ml-0.5", open: true },
  { icon: <VirtualBox />, margin: "ml-px", open: true },
  { icon: <Cmd />, margin: "-ml-px" },
  { icon: <Explorer />, margin: "-ml-1" },
  { icon: <KeePass />, margin: "-ml-0.5", open: true },
  { icon: <Terminal />, margin: "ml-0.5", open: true },
  { margin: "ml-0.5", open: true },
  { icon: <Sticky />, margin: "ml-0.5", open: true },
  { icon: <Putty />, margin: "ml-px", open: true },
  { icon: <Putty />, margin: "ml-0", open: true },
  { icon: <Putty />, margin: "ml-0", open: true },
  { icon: <Shell />, margin: "ml-0.5", open: true },
  { icon: <Shell />, margin: "ml-px", open: true },
  { icon: <Excel />, margin: "ml-px", open: true },
  { icon: <Excel />, margin: "ml-px", open: true },
  { icon: <ColorF />, margin: "ml-px", open: true },
  { icon: <NotepadPlus />, margin: "ml-px", open: true },
  { icon: <ZoomIcon className="size-7" />, margin: "ml-px", open: true },
];

function Taskbar() {
  return (
    <footer className="z-30 flex h-12 shrink-0 bg-[#070d15] text-white">
      <div className="flex w-[180px] shrink-0 items-center">
        <svg viewBox="0 0 20 20" className="ml-4 size-5" fill="#fff">
          <path d="M0 2.800L8.500 1.600v7.900H0zM9.500 1.500L20 0v9.500H9.500zM0 10.500h8.500v7.900L0 17.200zM9.500 10.500H20V20L9.500 18.500z" />
        </svg>
        <svg viewBox="0 0 22 22" className="ml-10 size-[21px]" fill="none" stroke="#fff" strokeWidth="1.500">
          <circle cx="13.500" cy="8" r="6.900" />
          <path d="M8.600 13L1 20.800" />
        </svg>
        <svg viewBox="0 0 22 20" className="ml-[38px] h-5 w-[22px]" fill="none" stroke="#fff" strokeWidth="1.500">
          <path d="M1.500 0v2.500h12V0M1.500 20v-2.500h12V20M1.500 5.500h12v9h-12zM19.500 0v5M19.500 10.500V20" />
          <path d="M18 6.500h3v2.500h-3z" fill="#fff" stroke="none" />
        </svg>
      </div>
      {tasks.map((t, i) => (
        <div key={i} className={`flex w-[52px] shrink-0 flex-col items-center ${t.margin} ${t.active ? "bg-[#3a3e44]" : ""}`}>
          <div className="flex h-[46px] items-center pt-px">{t.icon}</div>
          {t.open && <span className={`h-0.5 bg-[#76b9ed] ${t.active ? "w-[52px]" : "w-[43px]"}`} />}
        </div>
      ))}
      <div className="flex grow items-center">
        <svg viewBox="0 0 22 24" className="ml-[30px] h-6 w-[22px]" fill="none" stroke="#fff" strokeWidth="1.500">
          <circle cx="14.500" cy="5" r="3.800" />
          <path d="M10 14.500c0-8 10-7 9.500 0" />
          <circle cx="7" cy="13" r="3.300" />
          <path d="M2 22.500c0-8 9.500-7.500 9.500 0" />
        </svg>
        <svg viewBox="0 0 16 10" className="ml-[25px] h-2.5 w-4" fill="none" stroke="#fff" strokeWidth="1.400">
          <path d="M.8 9.200L8 1.500l7.200 7.700" />
        </svg>
        <svg viewBox="0 0 20 18" className="ml-3 h-[18px] w-5">
          <path d="M4 15.500a4 4 0 0 1 0-8 5.500 5.500 0 0 1 10-3 5.500 5.500 0 0 1 3 11z" fill="#8f9397" />
          <path d="M3 1l14.500 16" stroke="#070d15" strokeWidth="2.600" />
          <path d="M4 1l14.500 16" stroke="#e8e8e8" strokeWidth="1.300" />
        </svg>
        <svg viewBox="0 0 22 16" className="ml-2 h-4 w-[22px]" fill="none" stroke="#fff" strokeWidth="1.300">
          <path d="M7.500 4H19v11H5.500v-4M19.500 7.500h1.500v4h-1.500" />
          <path d="M7 6.500h3.500v6.500H7z" fill="#fff" stroke="none" />
          <path d="M1 4h5v2.500L4.500 8h-2L1 6.500zM2.300 4V1M4.800 4V1M3.500 8v3h2" />
        </svg>
        <svg viewBox="0 0 18 18" className="ml-[11px] size-[18px]" fill="none" stroke="#e8e8e8" strokeWidth="1.200">
          <path d="M1 17A16 16 0 0 1 16.500 1M5 17A12 12 0 0 1 16.500 5.500M9 17a8 8 0 0 1 7.500-7.500M12.500 17a4 4 0 0 1 4-4" />
          <circle cx="15.500" cy="16" r="1.500" fill="#fff" stroke="none" />
        </svg>
        <svg viewBox="0 0 22 18" className="ml-2.5 h-[18px] w-[22px]" fill="none" stroke="#fff" strokeWidth="1.300">
          <path d="M1 6.500h3.500L8.500 3v12l-4-3.500H1zM11.500 6q2 3 0 6M14.500 4q3.500 5 0 10M17.500 1.500q5 7.500 0 15" />
        </svg>
        <div className="mt-px ml-[11px] flex w-[68px] flex-col items-center font-['Open_Sans',sans-serif] text-[14.2px] leading-[23px] whitespace-nowrap">
          <span className="tracking-[-0.3px]">13:35</span>
          <span>24-9-2019</span>
        </div>
        <div className="relative ml-[23px] h-8 w-9">
          <svg viewBox="0 0 20 20" className="absolute top-[6px] left-0 size-5">
            <path d="M0 1h20v15h-5.500v4l-4.500-4H0z" fill="#fff" />
            <path d="M4 5h12M4 8.500h12M4 12h8" stroke="#070d15" strokeWidth="1.400" />
          </svg>
          <span className="absolute top-[15px] left-[9px] flex size-[22px] items-center justify-center rounded-full border border-[#8c8f93] bg-[#2b2f35] font-['Open_Sans',sans-serif] text-[13.5px] font-semibold">
            31
          </span>
        </div>
        <div className="grow" />
        <span className="mr-[5px] h-12 w-px bg-[#6d7075]" />
      </div>
    </footer>
  );
}

/* ------------------------------------------------------------------------ page */

export default function App() {
  return (
    <div className="relative flex h-[1026px] w-[1916px] flex-col overflow-hidden bg-white font-['Roboto',sans-serif]">
      <AddressRow />
      <BookmarkBar />
      <div className="h-px shrink-0 bg-[#a9abb4]" />
      <div className="h-px shrink-0 bg-white" />
      <div className="flex min-h-0 grow overflow-hidden bg-[#161719]">
        <Sidebar />
        <main className="flex min-w-0 grow flex-col overflow-hidden pl-5">
          <Header />
          <VariablesRow />
          <RowTitle title="Total usage" height="h-[63px]" />
          <div className="ml-px flex h-[336px] shrink-0">
            <Panel title="Memory utilization" width="w-[288px]" info>
              <div className="flex grow items-center justify-center text-[57px] font-medium text-[#32a52c]">43.5%</div>
            </Panel>
            <div className="w-[15px] shrink-0" />
            <Panel title="CPU utilization" width="w-[288px]" info>
              <div className="flex grow items-center justify-center pr-0.5 text-[57px] font-medium text-[#e0322f]">142.03%</div>
            </Panel>
            <div className="w-[15px] shrink-0" />
            <Panel title="Number of replicas" width="w-[592px]">
              <ReplicasChart />
            </Panel>
            <div className="w-[13px] shrink-0" />
            <Panel title="Container restarts" width="w-[592px]">
              <RestartsChart />
            </Panel>
          </div>
          <RowTitle title="CPU" height="h-16" />
          <div className="ml-px flex h-[340px] shrink-0">
            <Panel title="CPU usage" width="w-[1803px]">
              <div className="flex">
                <CpuChart />
                <CpuLegend />
              </div>
            </Panel>
          </div>
        </main>
        <span className="absolute top-[148px] right-0 h-[200px] w-[7px] rounded-full bg-[#3d3e4a]" />
      </div>
      <Taskbar />
      <PenStrokes />
    </div>
  );
}
